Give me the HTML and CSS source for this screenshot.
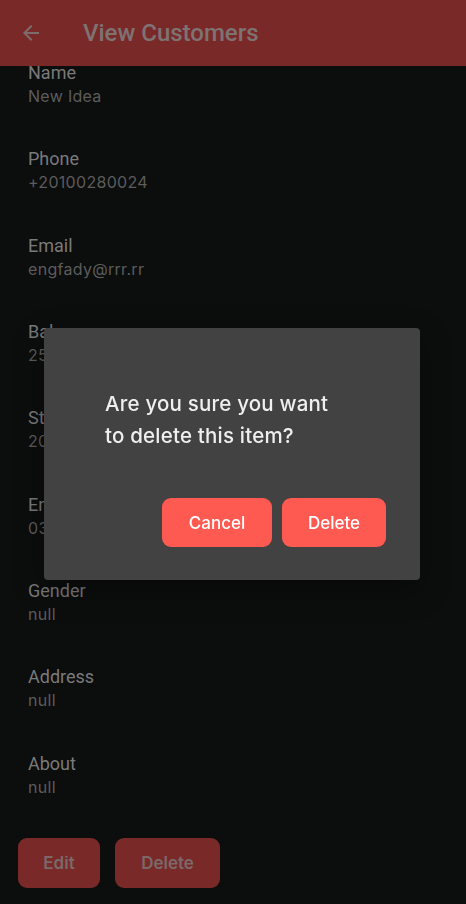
FILE: index.html
```html
<!DOCTYPE html>
<html>
<head>
<meta charset="utf-8">
<link rel="stylesheet" href="styles.css">
</head>
<body>
<header class="appbar">
  <svg class="back" width="24" height="24" viewBox="0 0 24 24"><path d="M20 11H7.83l5.59-5.59L12 4l-8 8 8 8 1.41-1.41L7.83 13H20v-2z" fill="currentColor"/></svg>
  <h1 class="title">View Customers</h1>
</header>
<main class="content">
  <div class="fields">
    <div class="field"><div class="label">Name</div><div class="value">New Idea</div></div>
    <div class="field"><div class="label">Phone</div><div class="value">+20100280024</div></div>
    <div class="field"><div class="label">Email</div><div class="value">engfady@rrr.rr</div></div>
    <div class="field"><div class="label">Balance</div><div class="value">2500</div></div>
    <div class="field"><div class="label">Start Date</div><div class="value">2023-01-01</div></div>
    <div class="field"><div class="label">End Date</div><div class="value">03-01-2024</div></div>
    <div class="field"><div class="label">Gender</div><div class="value">null</div></div>
    <div class="field"><div class="label">Address</div><div class="value">null</div></div>
    <div class="field"><div class="label">About</div><div class="value">null</div></div>
  </div>
  <div class="actions">
    <button class="btn-dim edit">Edit</button>
    <button class="btn-dim del">Delete</button>
  </div>
</main>
<div class="overlay">
  <div class="dialog">
    <p class="msg">Are you sure you want to delete this item?</p>
    <div class="dialog-actions">
      <button class="btn cancel">Cancel</button>
      <button class="btn delete">Delete</button>
    </div>
  </div>
</div>
</body>
</html>
```
FILE: styles.css
```css
* { box-sizing: border-box; }
html, body { margin: 0; padding: 0; }
body {
  background: #0c0d0d;
  width: 466px;
  height: 904px;
  overflow: hidden;
  font-family: Roboto, "Liberation Sans", sans-serif;
  position: relative;
}
.appbar {
  position: fixed;
  top: 0; left: 0; right: 0;
  height: 66px;
  background: #7a2929;
  display: flex;
  align-items: center;
  padding-left: 19px;
  z-index: 2;
}
.back { color: #7c6c6c; width: 24px; height: 24px; }
.title {
  margin: 0 0 0 40px;
  font-size: 24px;
  font-weight: 500;
  color: #7e7373;
}
.content { padding-top: 63px; }
.fields {
  display: flex;
  flex-direction: column;
  gap: 42.33px;
  padding-left: 28px;
}
.label {
  font-size: 18px;
  line-height: 20px;
  color: #7a7a7a;
}
.value {
  font-family: Inter, "Noto Sans", sans-serif;
  font-size: 16px;
  line-height: 22px;
  margin-top: 2px;
  letter-spacing: 0.3px;
  color: #5c5c5c;
}
.actions {
  display: flex;
  gap: 15px;
  padding-left: 18px;
  margin-top: 40px;
}
.btn-dim {
  height: 50px;
  border: none;
  border-radius: 9px;
  background: #7a2929;
  color: #7c6868;
  font-family: Inter, sans-serif;
  font-weight: 600;
  font-size: 17px;
}
.edit { width: 82px; }
.del { width: 105px; }
.overlay {
  position: fixed;
  inset: 0;
  display: flex;
  align-items: center;
  justify-content: center;
  z-index: 3;
}
.dialog {
  width: 376px;
  height: 252px;
  margin-top: 4px;
  margin-right: 2px;
  background: #424242;
  border-radius: 4px;
  box-shadow: 0 10px 30px rgba(0,0,0,0.35);
  padding: 60px 34px 33px 61px;
  display: flex;
  flex-direction: column;
}
.msg {
  margin: 0;
  width: 245px;
  font-family: Inter, sans-serif;
  font-weight: 500;
  font-size: 20.5px;
  line-height: 32px;
  letter-spacing: 0.2px;
  color: #efefef;
}
.dialog-actions {
  margin-top: auto;
  display: flex;
  justify-content: flex-end;
  gap: 10px;
}
.btn {
  height: 49px;
  border: none;
  border-radius: 9px;
  background: #ff5a52;
  color: #fff;
  font-family: Inter, sans-serif;
  font-weight: 500;
  font-size: 17px;
}
.cancel { width: 110px; }
.delete { width: 104px; }
```
